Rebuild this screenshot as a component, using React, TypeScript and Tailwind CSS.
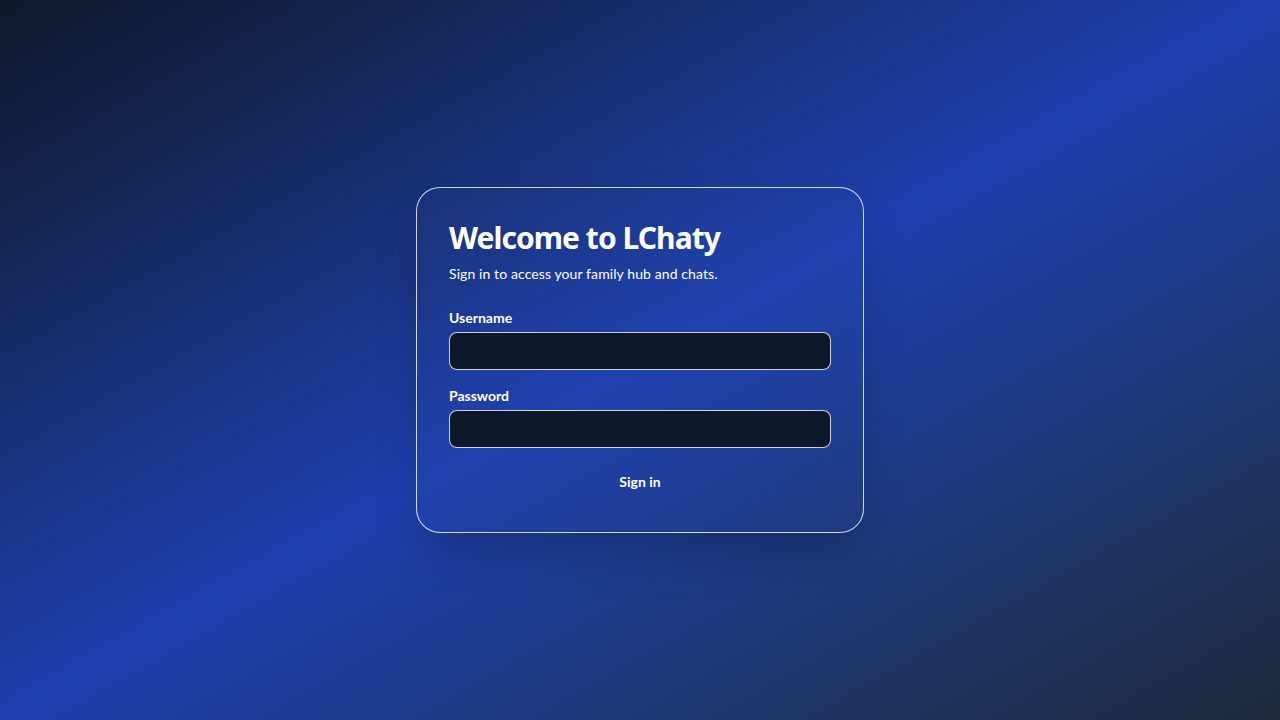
export default function App() {
  return (
    <div
      className="min-h-screen w-full flex items-center justify-center bg-gradient-to-br from-[#0f172a] via-[#1e40af] to-[#1e293b]"
      style={{ fontFamily: '"Segoe UI", Lato, "Noto Sans", sans-serif' }}
    >
      <div className="w-[448px] rounded-3xl border border-white/80 bg-white/[0.01] p-8 shadow-2xl text-white">
        <h1
          className="text-3xl font-bold leading-9 tracking-[-0.95px]"
          style={{ fontFamily: '"Segoe UI", "Noto Sans", sans-serif' }}
        >
          Welcome to LChaty
        </h1>
        <p className="mt-2 text-sm leading-5 text-white tracking-[0.1px]">
          Sign in to access your family hub and chats.
        </p>

        <form className="mt-6 space-y-4" onSubmit={(e) => e.preventDefault()}>
          <div>
            <label className="mb-1 block text-sm font-bold leading-5">Username</label>
            <input
              type="text"
              className="block w-full rounded-lg border border-white/80 bg-[#0f172a] px-3 py-2 text-sm leading-5 text-white outline-none"
            />
          </div>
          <div>
            <label className="mb-1 block text-sm font-bold leading-5">Password</label>
            <input
              type="password"
              className="block w-full rounded-lg border border-white/80 bg-[#0f172a] px-3 py-2 text-sm leading-5 text-white outline-none"
            />
          </div>
          <button type="submit" className="block w-full py-2 text-sm font-bold leading-5 text-white">
            Sign in
          </button>
        </form>
      </div>
    </div>
  )
}
